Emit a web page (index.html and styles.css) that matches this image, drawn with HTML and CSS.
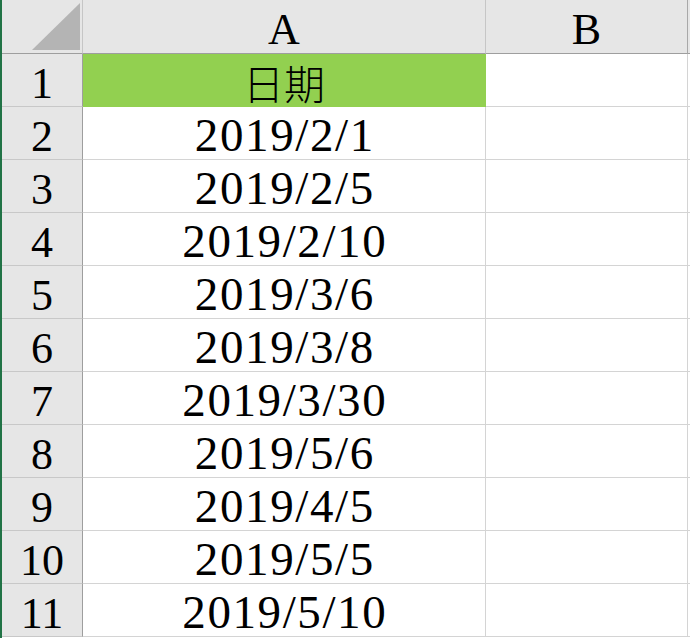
FILE: index.html
```html
<!DOCTYPE html>
<html lang="zh-CN">
<head>
<meta charset="utf-8">
<title>Sheet</title>
<link rel="stylesheet" href="styles.css">
</head>
<body>
<div class="app">
  <div class="edge"></div>
  <div class="sheet">
    <div class="hdr corner"><svg class="tri" width="48" height="47" viewBox="0 0 48 47"><polygon points="48,0 48,47 0,47" fill="#b4b4b4"/></svg></div>
    <div class="hdr col">A</div>
    <div class="hdr col last">B</div>
    <div class="hdr colc"></div>

    <div class="rh">1</div><div class="cell a green">日期</div><div class="cell b"></div><div class="cell c"></div>
    <div class="rh">2</div><div class="cell a">2019/2/1</div><div class="cell b"></div><div class="cell c"></div>
    <div class="rh">3</div><div class="cell a">2019/2/5</div><div class="cell b"></div><div class="cell c"></div>
    <div class="rh">4</div><div class="cell a">2019/2/10</div><div class="cell b"></div><div class="cell c"></div>
    <div class="rh">5</div><div class="cell a">2019/3/6</div><div class="cell b"></div><div class="cell c"></div>
    <div class="rh">6</div><div class="cell a">2019/3/8</div><div class="cell b"></div><div class="cell c"></div>
    <div class="rh">7</div><div class="cell a">2019/3/30</div><div class="cell b"></div><div class="cell c"></div>
    <div class="rh">8</div><div class="cell a">2019/5/6</div><div class="cell b"></div><div class="cell c"></div>
    <div class="rh">9</div><div class="cell a">2019/4/5</div><div class="cell b"></div><div class="cell c"></div>
    <div class="rh">10</div><div class="cell a">2019/5/5</div><div class="cell b"></div><div class="cell c"></div>
    <div class="rh">11</div><div class="cell a">2019/5/10</div><div class="cell b"></div><div class="cell c"></div>
  </div>
</div>
</body>
</html>
```

FILE: styles.css
```css
html, body {
  margin: 0;
  padding: 0;
  background: #ffffff;
}
.app {
  display: flex;
  width: 690px;
  height: 638px;
  overflow: hidden;
}
.edge {
  width: 2px;
  flex: none;
  background: #217346;
}
.sheet {
  display: grid;
  grid-template-columns: 81px 403px 202px 2px;
  grid-template-rows: 54px repeat(11, 53px);
  font-family: "Liberation Serif", "Noto Sans CJK SC", serif;
  font-size: 44px;
  line-height: 1;
  color: #000;
}
.sheet > div {
  box-sizing: border-box;
  display: flex;
  justify-content: center;
  align-items: flex-end;
}
.hdr {
  background: #e6e6e6;
  border-bottom: 1px solid #9e9e9e;
  border-right: 1px solid #c6c6c6;
  padding-bottom: 1px;
}
.corner {
  justify-content: flex-end !important;
  padding: 0 2px 3px 0;
  border-right-color: #c6c6c6;
}
.tri {
  display: block;
}
.hdr.last {
  border-right-color: #a8a8a8;
}
.colc {
  border-right: none;
}
.rh {
  background: #e6e6e6;
  border-right: 1px solid #9e9e9e;
  border-bottom: 1px solid #c8c8c8;
}
.cell {
  background: #ffffff;
  border-right: 1px solid #d4d4d4;
  border-bottom: 1px solid #d4d4d4;
}
.cell.a {
  font-size: 47px;
  letter-spacing: 1.6px;
  text-indent: 1.6px;
  padding-bottom: 0;
}
.cell.c {
  border-right: none;
}
.cell.green {
  background: #92d050;
  border-right-color: #92d050;
  border-bottom-color: #92d050;
  font-family: "Noto Sans CJK SC", sans-serif;
  font-size: 41px;
  font-weight: 300;
  letter-spacing: 0;
  text-indent: 0;
  padding-bottom: 3px;
}
```
